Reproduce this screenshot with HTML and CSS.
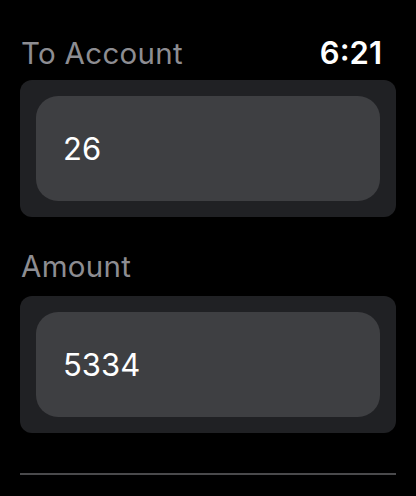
FILE: index.html
```html
<!DOCTYPE html>
<html>
<head>
<meta charset="utf-8">
<link rel="stylesheet" href="styles.css">
</head>
<body>
<div class="screen">
  <div class="header">
    <span class="label">To Account</span>
    <span class="time">6:21</span>
  </div>
  <div class="card">
    <div class="field">26</div>
  </div>
  <div class="label-row">
    <span class="label">Amount</span>
  </div>
  <div class="card">
    <div class="field">5334</div>
  </div>
  <div class="divider"></div>
</div>
</body>
</html>
```
FILE: styles.css
```css
html, body {
  margin: 0;
  padding: 0;
  background: #000;
}
.screen {
  width: 416px;
  height: 496px;
  overflow: hidden;
  padding: 0 20px;
  box-sizing: border-box;
  font-family: Inter, "Liberation Sans", sans-serif;
}
.header {
  display: flex;
  justify-content: space-between;
  align-items: baseline;
  padding-top: 36px;
  padding-right: 14px;
  line-height: 34px;
}
.label-row {
  margin-top: 32px;
  line-height: 34px;
}
.label-row + .card {
  margin-top: 8px;
}
.label {
  color: #8d8d92;
  font-size: 29.5px;
  letter-spacing: 0.3px;
  font-weight: 400;
  padding-left: 1px;
}
.time {
  color: #fff;
  font-size: 31px;
  font-weight: 600;
}
.card {
  margin-top: 10px;
  background: #202124;
  border-radius: 12px;
  padding: 16px;
}
.field {
  height: 105px;
  background: #3e3f42;
  border-radius: 22px;
  display: flex;
  align-items: center;
  padding-left: 27px;
  color: #fff;
  font-size: 31px;
  font-weight: 400;
}
.divider {
  margin-top: 40px;
  height: 2px;
  background: #4a4a4c;
}
```
